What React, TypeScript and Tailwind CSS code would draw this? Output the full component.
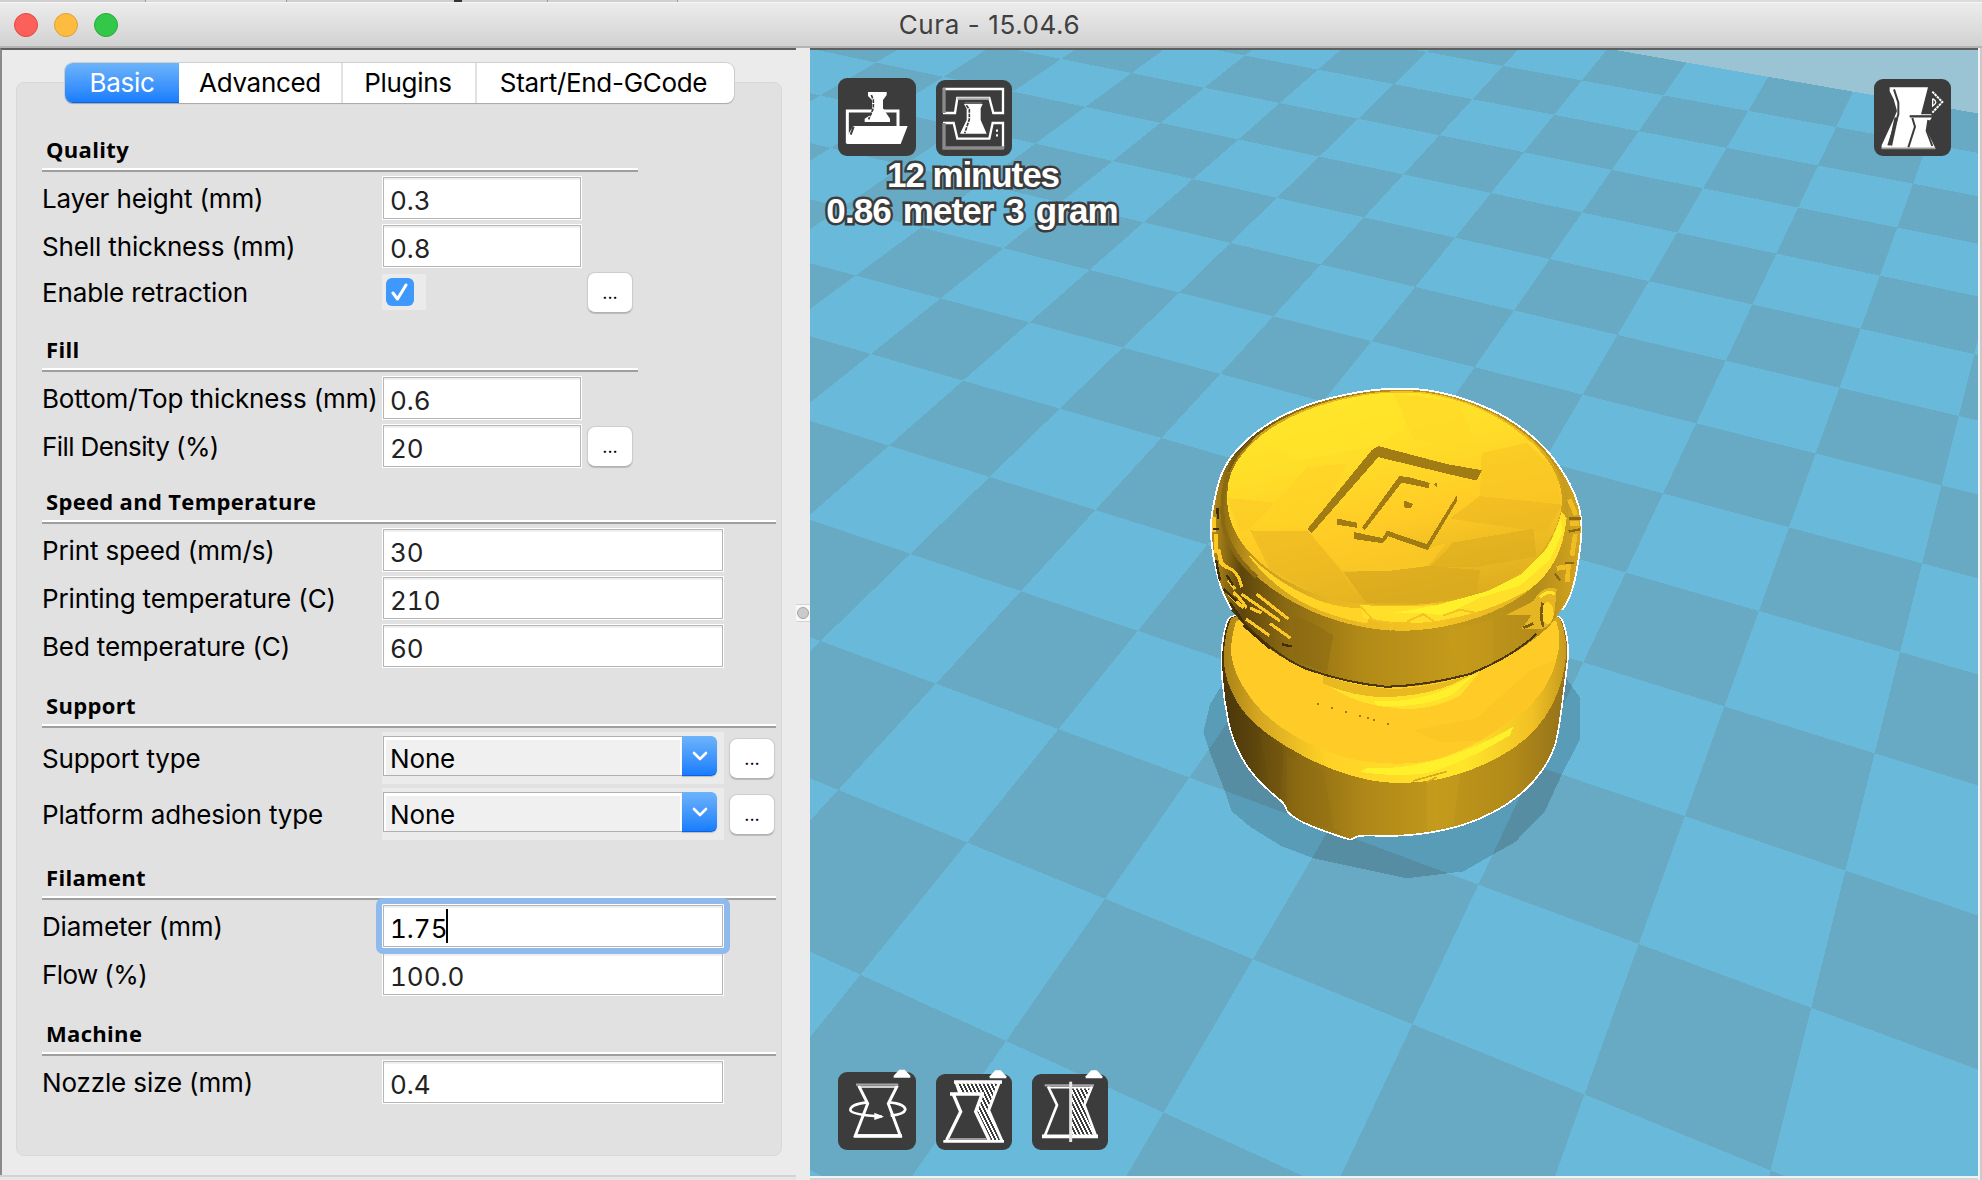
import React from "react";

type Pt = [number, number];

/* ---------- geometry helpers ---------- */

// grid column, grid row, screen x, screen y
const ANCHORS: [number, number, number, number][] = [
  [0, 2, 839, 790],
  [0, 1, 935.3, 684.3],
  [0, 0, 1020.7, 591.1],
  [0, -1, 1095, 510],
  [0, -2, 1161.3, 437.5],
  [-1, 0, 910, 553.9],
  [-1, -2, 1060.7, 408.6],
  [-2, -1, 889.3, 445.4],
  [-2, -3, 1029.3, 322.5],
  [-3, -2, 871, 353.9],
  [6, 2, 1770.7, 1170],
  [5, 2, 1584, 1094.7],
  [5, 1, 1638.7, 944],
  [6, 0, 1845.3, 870.3],
  [5, -2, 1759, 611.4],
  [6, -4, 1941, 485.7],
  [6, -6, 1974.7, 353.6],
  [5, -9, 1913.7, 183.6],
  [4, -7, 1777, 253.9],
  [3, -9, 1726.7, 147.9],
  [4, -11, 1852, 91.7],
];

function solve(m: number[][], v: number[]): number[] {
  const n = v.length;
  const a = m.map((r, i) => [...r, v[i]]);
  for (let c = 0; c < n; c++) {
    let p = c;
    for (let r = c + 1; r < n; r++) if (Math.abs(a[r][c]) > Math.abs(a[p][c])) p = r;
    [a[c], a[p]] = [a[p], a[c]];
    for (let r = 0; r < n; r++) {
      if (r === c) continue;
      const f = a[r][c] / a[c][c];
      for (let k = c; k <= n; k++) a[r][k] -= f * a[c][k];
    }
  }
  return a.map((r, i) => r[n] / r[i]);
}

function fitCamera(): number[] {
  const ata = Array.from({ length: 8 }, () => Array(8).fill(0));
  const atb = Array(8).fill(0);
  for (const [a, b, X, Y] of ANCHORS) {
    const x = (X - 1400) / 500;
    const y = (Y - 600) / 500;
    const rows: [number[], number][] = [
      [[a, b, 1, 0, 0, 0, -a * x, -b * x], x],
      [[0, 0, 0, a, b, 1, -a * y, -b * y], y],
    ];
    for (const [r, t] of rows)
      for (let i = 0; i < 8; i++) {
        atb[i] += r[i] * t;
        for (let j = 0; j < 8; j++) ata[i][j] += r[i] * r[j];
      }
  }
  return solve(ata, atb);
}

const H = fitCamera();
const depth = (a: number, b: number) => H[6] * a + H[7] * b + 1;
function project(a: number, b: number): Pt {
  const w = depth(a, b);
  return [((H[0] * a + H[1] * b + H[2]) / w) * 500 + 1400, ((H[3] * a + H[4] * b + H[5]) / w) * 500 + 600];
}

const FAR_ROW = -11;
const cells: { d: string; dark: boolean }[] = [];
for (let a = -16; a < 12; a++)
  for (let b = FAR_ROW; b < 9; b++) {
    const c: Pt[] = [[a, b], [a + 1, b], [a + 1, b + 1], [a, b + 1]];
    if (c.some(([p, q]) => depth(p, q) < 0.08)) continue;
    cells.push({
      d: "M" + c.map(([p, q]) => project(p, q).map((n) => n.toFixed(1)).join(",")).join("L") + "Z",
      dark: (a + b) % 2 === 0,
    });
  }

// closed curve that passes through the midpoints of the given polygon
function smooth(p: Pt[]): string {
  const mid = (a: Pt, b: Pt) => `${(a[0] + b[0]) / 2},${(a[1] + b[1]) / 2}`;
  let d = `M${mid(p[p.length - 1], p[0])}`;
  p.forEach((q, i) => (d += `Q${q[0]},${q[1]} ${mid(q, p[(i + 1) % p.length])}`));
  return d + "Z";
}

/* ---------- model ---------- */

const LOWER = smooth([[220, 725], [195, 780], [184, 870], [195, 990], [218, 1100], [265, 1185], [320, 1243], [378, 1288], [382, 1312], [430, 1342], [500, 1368], [568, 1390], [572, 1390], [600, 1377], [680, 1380], [760, 1377], [860, 1362], [950, 1335], [1040, 1290], [1115, 1230], [1170, 1155], [1192, 1090], [1213, 930], [1224, 850], [1215, 780], [1190, 725]]);
const LOWER_RIM = smooth([[225, 725], [200, 780], [188, 870], [205, 950], [260, 1040], [370, 1120], [500, 1185], [640, 1226], [770, 1230], [900, 1205], [1040, 1145], [1140, 1065], [1200, 960], [1222, 850], [1212, 780], [1190, 725]]);
const LOWER_FACE = smooth([[235, 735], [218, 790], [210, 860], [240, 940], [310, 1030], [420, 1105], [560, 1160], [700, 1175], [830, 1165], [970, 1105], [1080, 1035], [1160, 950], [1195, 860], [1200, 790], [1180, 735]]);
const UPPER = smooth([[188, 325], [225, 268], [310, 193], [440, 130], [600, 93], [720, 84], [820, 91], [930, 120], [1045, 170], [1150, 250], [1210, 330], [1245, 395], [1262, 455], [1262, 520], [1245, 630], [1225, 695], [1200, 730], [1165, 780], [1060, 855], [930, 915], [800, 945], [680, 952], [560, 935], [440, 900], [335, 848], [245, 765], [195, 690], [170, 610], [156, 530], [155, 460], [172, 380]]);
const UPPER_RIM = smooth([[200, 325], [235, 270], [315, 197], [440, 136], [600, 97], [720, 89], [820, 95], [930, 124], [1040, 174], [1145, 252], [1200, 330], [1225, 400], [1222, 490], [1190, 580], [1120, 665], [1000, 735], [850, 778], [700, 790], [560, 768], [430, 722], [310, 650], [230, 570], [185, 480], [182, 390]]);
const UPPER_FACE = smooth([[212, 325], [245, 272], [320, 202], [445, 140], [600, 101], [720, 93], [820, 99], [930, 128], [1036, 178], [1138, 256], [1190, 330], [1210, 400], [1195, 480], [1140, 570], [1060, 635], [950, 685], [800, 712], [620, 712], [480, 688], [350, 630], [250, 545], [205, 460], [200, 380]]);

const FACETS: [string, string][] = [
  ["700,97 930,125 900,135 960,270 760,230", "#ffd826"],
  ["440,140 725,140 735,200 640,250 420,290 300,230", "#ffe429"],
  ["965,270 1100,240 1195,330 1200,420 960,395", "#f7c423"],
  ["960,395 1205,420 1160,500 930,470 870,460", "#e9b821"],
  ["880,530 1120,490 1130,570 960,600 810,600", "#dbab1e"],
  ["550,615 690,612 810,598 960,610 950,680 800,706 620,706", "#d5a61e"],
  ["270,495 445,497 545,615 600,700 480,685 330,610", "#e7b622"],
  ["450,500 520,430 700,510 800,550 860,530 805,598 690,612 548,613", "#ffcd26"],
  ["345,415 440,312 560,300 500,420 445,490 320,480", "#ffd226"],
  ["200,400 345,415 270,490 240,500", "#fbca26"],
];

const ENGRAVING = [
  "635,262 655,250 860,302 965,320 950,350 860,330 655,282",
  "635,262 655,282 455,503 443,490",
  "718,337 745,340 810,357 805,372 725,356 615,493 605,488",
  "822,362 832,354 832,371",
  "732,408 760,418 752,430 732,428",
  "530,460 592,473 590,487 530,478",
  "583,500 668,517 680,495 800,535 892,390 892,408 803,552 685,512 668,532 583,520",
];

function Model() {
  return (
    <g transform="translate(1160 360) scale(0.33333 0.34439)">
      <polygon fill="#000" fillOpacity="0.16" points="200,920 150,1000 130,1080 150,1140 190,1240 215,1310 270,1355 365,1412 465,1448 740,1505 910,1485 1000,1435 1065,1400 1155,1310 1205,1205 1260,1100 1260,980 1215,920" />
      <path d={LOWER} fill="url(#side)" stroke="#fff" strokeWidth="10" />
      <path d={LOWER} fill="url(#side)" />
      <polygon fill="#8f6d13" points="380,1150 490,1190 520,1360 560,1385 382,1310" opacity=".35" />
      <polygon fill="#c79d1d" points="800,1228 900,1205 880,1350 800,1372" opacity=".5" />
      <polygon fill="#6f530e" points="300,1080 370,1125 360,1275 330,1245" opacity=".4" />
      <path d={LOWER_RIM} fill="url(#rim)" />
      <path d={LOWER_FACE} fill="#ffcb26" />
      <path d="M760,1075 L950,1040 L1110,900 L1190,870 L1150,960 L1080,1030 L960,1105 L840,1110Z" fill="#fbc524" opacity=".8" />
      <path d="M500,925 C600,985 800,985 960,905 L900,975 Q800,1025 700,1010 Q580,1000 500,940Z" fill="#ffe02a" />
      <path d="M640,990 Q800,1000 940,915 L880,970 Q790,1012 650,1003Z" fill="#fff02c" />
      <path d="M490,940 Q600,985 700,978 Q840,970 930,915 Q800,955 690,955 Q570,945 490,915Z" fill="#e9b922" />
      <path d="M620,1185 Q830,1195 1060,1065 L1050,1090 Q900,1175 800,1200 Q700,1212 600,1196Z" fill="#fff02c" />
      <path d="M760,1222 L860,1195 M800,1226 L830,1212" stroke="#d9a91f" strokeWidth="5" />
      {[[470, 995], [513, 1007], [555, 1019], [597, 1031], [621, 1037], [639, 1042], [681, 1054]].map(([x, y]) => (
        <rect key={x} x={x} y={y} width="6" height="6" fill="#a17c15" />
      ))}

      <path d={UPPER} fill="none" stroke="#fff" strokeWidth="11" clipPath="url(#aboveWaist)" />
      <path d={UPPER} fill="url(#side2)" />
      <path d="M215,725 Q340,860 440,897 Q560,938 680,949 Q800,945 930,912 Q1060,860 1130,795" fill="none" stroke="#4a370a" strokeWidth="6" />
      <polygon fill="#8a6912" points="400,740 470,770 520,800 500,910 400,870" opacity=".45" />
      <polygon fill="#c89e1d" points="860,790 1000,750 1000,880 900,915" opacity=".35" />
      <path d={UPPER_RIM} fill="url(#rim2)" />
      <path d={UPPER_FACE} fill="url(#face)" />
      <g clipPath="url(#faceClip)">
        {FACETS.map(([p, c]) => (
          <polygon key={p} points={p} fill={c} opacity=".6" />
        ))}
      </g>
      <path d="M260,560 Q350,650 480,700 Q560,725 640,722 L620,765 Q520,748 440,710 Q330,655 260,560Z" fill="#ffd427" />
      <path d="M600,712 Q700,716 830,712 Q960,692 1070,635 Q1170,570 1205,440 L1220,460 Q1205,600 1110,665 Q980,740 800,762 Q700,765 610,750Z" fill="#ffdf29" />
      <path d="M700,735 L830,712 L980,672 L1080,625 L1165,545 L1203,460 L1208,500 L1170,580 L1080,655 L960,690 L850,742 L790,735Z" fill="#fff02c" />
      <path d="M600,715 L640,755 L700,765 L690,785 M740,760 L790,738 L830,765 M850,742 L900,725 L950,735" stroke="#f3c323" strokeWidth="6" fill="none" />

      {/* raised lettering round the left edge */}
      <g fill="none" stroke="#fbc825" strokeWidth="9">
        <path d="M163,455 V500 M168,505 V560 M175,550 L184,590 L200,602" strokeWidth="12" />
        <path d="M195,600 Q235,610 245,660 M205,640 L225,665 M205,680 L250,720 M220,675 Q240,690 260,720" />
        <path d="M290,680 L385,752 M245,680 L360,758 M270,720 L305,735 M258,752 L328,800 M330,765 L392,808" />
      </g>
      <g fill="none" stroke="#3f2e08" strokeWidth="7">
        <path d="M172,430 L174,462 M160,490 H176 M168,580 L180,640 M200,625 L220,655 M190,665 L230,700 M210,705 L250,760 M250,770 L330,838 M365,825 L395,832" />
        <path d="M205,330 Q180,400 190,480 Q215,570 290,630" stroke="#8a6912" strokeWidth="12" />
        <path d="M205,325 Q225,275 275,232" stroke="#7a5c10" />
      </g>
      {/* raised ornament on the right edge */}
      <path d="M1120,700 Q1150,650 1190,665 L1185,720 Q1180,775 1140,782 L1085,780 L1115,740 L1040,740Z" fill="#e5b522" />
      <ellipse cx="1163" cy="735" rx="18" ry="32" fill="#ffd227" />
      <path d="M1140,690 Q1165,665 1185,680" stroke="#ffe52a" strokeWidth="9" fill="none" />
      <path d="M1090,778 L1120,765 M1148,705 Q1138,740 1150,775" stroke="#7a5c10" strokeWidth="8" fill="none" />
      <path d="M1228,405 L1248,450 M1230,475 H1256 M1246,505 L1236,568 M1190,605 L1225,600 L1222,645" stroke="#f0be23" strokeWidth="14" fill="none" />
      <path d="M1226,460 H1262 M1226,498 L1260,492 M1215,590 L1242,590 M1200,640 L1185,620" stroke="#8a6912" strokeWidth="7" fill="none" />

      {ENGRAVING.map((p) => (
        <polygon key={p} points={p} fill="#a17c15" />
      ))}
    </g>
  );
}

function Scene() {
  return (
    <svg className="block h-full w-full" viewBox="810 50 1168 1126" preserveAspectRatio="none" shapeRendering="crispEdges">
      <defs>
        <linearGradient id="side">
          <stop offset="0" stopColor="#4a360a" />
          <stop offset=".1" stopColor="#5e460c" />
          <stop offset=".22" stopColor="#8a6912" />
          <stop offset=".4" stopColor="#ad8618" />
          <stop offset=".62" stopColor="#c0981b" />
          <stop offset=".85" stopColor="#b08919" />
          <stop offset="1" stopColor="#94711a" />
        </linearGradient>
        <linearGradient id="side2">
          <stop offset="0" stopColor="#b88f19" />
          <stop offset=".08" stopColor="#5e460c" />
          <stop offset=".2" stopColor="#8a6912" />
          <stop offset=".4" stopColor="#b18917" />
          <stop offset=".65" stopColor="#c49a1b" />
          <stop offset=".88" stopColor="#b48c19" />
          <stop offset="1" stopColor="#d4a51f" />
        </linearGradient>
        <linearGradient id="rim">
          <stop offset="0" stopColor="#a98217" />
          <stop offset=".1" stopColor="#d5a620" />
          <stop offset=".3" stopColor="#ffd227" />
          <stop offset=".7" stopColor="#ffe52a" />
          <stop offset=".9" stopColor="#f2c124" />
          <stop offset="1" stopColor="#c69b1e" />
        </linearGradient>
        <linearGradient id="rim2">
          <stop offset="0" stopColor="#8d6b12" />
          <stop offset=".1" stopColor="#c99e1d" />
          <stop offset=".3" stopColor="#e6b521" />
          <stop offset=".6" stopColor="#f5c424" />
          <stop offset=".9" stopColor="#e6b520" />
          <stop offset="1" stopColor="#c69b1c" />
        </linearGradient>
        <linearGradient id="face" x1=".3" y1="0" x2=".65" y2="1">
          <stop offset="0" stopColor="#ffe82a" />
          <stop offset=".3" stopColor="#ffdd28" />
          <stop offset=".6" stopColor="#ffcb26" />
          <stop offset="1" stopColor="#dcac20" />
        </linearGradient>
        <clipPath id="faceClip"><path d={UPPER_FACE} /></clipPath>
        <clipPath id="aboveWaist"><path d="M100,0H1380V725H100Z" /></clipPath>
      </defs>
      <rect x="810" y="50" width="1168" height="1126" fill="#9ac3d4" />
      {cells.map((c) => (
        <path key={c.d} d={c.d} fill={c.dark ? "#68a9c3" : "#69bada"} />
      ))}
      <Model />
    </svg>
  );
}

/* ---------- viewport tool icons ---------- */

function Tool({ box, children, size = "h-[76px] w-[76px]" }: { box: string; children: React.ReactNode; size?: string }) {
  return (
    <button className={"block rounded-[9px] bg-[#3c3c3c] " + size}>
      <svg viewBox={box} className="block h-full w-full overflow-visible" fill="none" stroke="#fff" strokeWidth="7">
        {children}
      </svg>
    </button>
  );
}

const LoadIcon = () => (
  <Tool box="84 114 234 234" size="h-[78px] w-[78px]">
    <path d="M112,310 V213 H264 V262" strokeWidth="9" />
    <path d="M174,156 H230 V165 L219,180 V205 L240,236 V246 H164 V236 L186,222 V180 L174,168Z" fill="#fff" stroke="none" />
    <path d="M184,165 L190,180 V205 L176,238" stroke="#3c3c3c" strokeWidth="5" strokeDasharray="11 3" />
    <path d="M130,258 H293 L272,312 H110 V290Z" fill="#fff" stroke="none" />
    <path d="M131,260 L122,284" stroke="#3c3c3c" strokeWidth="6" />
  </Tool>
);

const SaveIcon = () => (
  <Tool box="378 120 228 228">
    <path d="M399,219 H435 L442,174 H538 L550,219 H579 V147 H399" />
    <path d="M399,249 H431 L442,296 H538 L548,249 H579 V326" />
    <path d="M402,145 V219 M402,249 V324 H582" stroke="#8b8b8b" strokeWidth="10" />
    <path d="M442,176 H538" stroke="#b0b0b0" />
    <path d="M462,192 H518 L512,205 V240 L530,281 H450 L470,240 V206Z" fill="#fff" stroke="none" />
    <path d="M469,196 L478,208 V238 L464,280" stroke="#3c3c3c" strokeWidth="5" strokeDasharray="11 3" />
    <path d="M464,189 H516" stroke="#777" strokeWidth="4" />
    <path d="M558,272h6M558,286h6" />
  </Tool>
);

const ViewIcon = () => (
  <Tool box="283 119 231 231" size="h-[77px] w-[77px]">
    <path d="M330,144 H445 L424,225 H455 V238 L442,250 V275 L468,328 H306 V318 L342,240 L352,215 L342,180 L330,156Z" fill="#fff" stroke="none" />
    <path d="M343,150 L356,190 V225 L326,318 M398,236 L406,262 L386,324 M446,242 L441,275 L458,320" stroke="#3c3c3c" strokeWidth="6" />
    <path d="M350,235 L332,318" stroke="#3c3c3c" strokeWidth="11" />
    <path d="M390,231 H456" stroke="#3c3c3c" />
    <path d="M306,327 H466" stroke="#9a9a9a" strokeWidth="5" />
    <path d="M458,157 L488,188 L458,220" strokeWidth="6" strokeDasharray="8 2" />
    <path d="M459,178 V200 Q478,188 459,178" strokeWidth="4" />
  </Tool>
);

const Marker = ({ x }: { x: number }) => <path d={`M${x - 25},84 V78 L${x - 8},60 H${x + 8} L${x + 25},78 V84Z`} fill="#fff" stroke="none" />;

const RotateIcon = () => (
  <Tool box="54 67 234 234" size="h-[78px] w-[78px]">
    <Marker x={246} />
    <path d="M116,108 L143,162 L106,258 H241 L205,162 L232,108" strokeWidth="9" />
    <path d="M108,105 H235" stroke="#a5a5a5" />
    <path d="M118,112 H228" strokeWidth="5" />
    <path d="M102,259 H246" strokeWidth="11" />
    <path d="M143,158 Q92,163 91,181 Q94,196 185,200 M206,158 Q254,162 256,180 Q252,194 212,198" strokeWidth="8" />
    <path d="M163,189 L192,201 L163,211Z" fill="#fff" stroke="none" />
  </Tool>
);

// zigzag texture: staggered rows of white dashes inside the given outline
function Hatched({ id, outline, x, y, rows }: { id: string; outline: string; x: number; y: number; rows: number }) {
  return (
    <g clipPath={`url(#${id})`} shapeRendering="crispEdges">
      <clipPath id={id}><path d={outline} /></clipPath>
      {Array.from({ length: rows }, (_, i) => (
        <path key={i} d={`M${x + [0, 3, 6, 9][i % 4] - 12},${y + i * 6} h170`} strokeWidth="6" strokeDasharray="6 6" />
      ))}
    </g>
  );
}

const ScaleIcon = () => (
  <Tool box="348 71 228 228">
    <Marker x={534} />
    <Hatched id="scaleHatch" outline="M410,96 H538 L506,180 L542,270 H508 L468,182 L486,132 H420Z" x={408} y={98} rows={30} />
    <path d="M408,96 L420,130 M538,96 L506,180 L546,272" strokeWidth="9" />
    <path d="M402,95 H546" strokeWidth="10" />
    <path d="M390,131 H492 M400,132 L422,184 L380,270 M486,132 L467,184 L508,270" strokeWidth="10" />
    <path d="M370,273 H552" strokeWidth="8" />
    <path d="M384,266 H500" stroke="#bbb" strokeWidth="4" />
  </Tool>
);

const MirrorIcon = () => (
  <Tool box="636 71 228 228">
    <Marker x={822} />
    <Hatched id="mirrorHatch" outline="M752,110 H813 L791,164 L824,256 H752Z" x={750} y={116} rows={25} />
    <path d="M684,108 L711,164 L674,258 M816,108 L793,164 L828,258" strokeWidth="8" />
    <path d="M674,105 H822" stroke="#a5a5a5" />
    <path d="M684,112 H816" strokeWidth="5" />
    <path d="M666,258 H834" strokeWidth="11" />
    <path d="M752,94 V275" strokeWidth="9" stroke="#e6e6e6" />
  </Tool>
);

/* ---------- settings panel ---------- */

const sans = "font-['Inter','Liberation_Sans',sans-serif]";

function Section({ title, height, short, children }: { title: string; height: string; short?: boolean; children: React.ReactNode }) {
  return (
    <section className={height}>
      <h2 className="h-10 pt-[3px] pl-[4px] font-['Open_Sans','Noto_Sans',sans-serif] text-[22px] leading-[36px] font-bold tracking-[0.32px] text-black">{title}</h2>
      <div className={"mb-1 h-1 border-t-2 border-b-2 border-t-white border-b-[#9f9f9f] " + (short ? "w-[596px]" : "w-[734px]")} />
      <div className="flex flex-col gap-1">{children}</div>
    </section>
  );
}

function Row({ label, height = "h-11", tight, children }: { label: string; height?: string; tight?: boolean; children: React.ReactNode }) {
  return (
    <div className={"flex items-center " + height}>
      <label className={"w-[340px] text-[26px] whitespace-nowrap text-black " + (tight ? "tracking-[-0.6px]" : "tracking-[-0.14px]")}>{label}</label>
      {children}
    </div>
  );
}

function Field({ value, short, focused }: { value: string; short?: boolean; focused?: boolean }) {
  return (
    <div
      className={
        "flex h-11 items-center border border-white bg-white " +
        (short ? "w-[200px] " : "w-[342px] ") +
        (focused ? "relative z-10 rounded-[1px] outline-[6px] outline-[#8fbaed] " : "")
      }
    >
      <div className={"flex h-full w-full items-center border border-[#b5b5b5] pt-[4px] pl-[6px] text-[26px] tabular-nums shadow-[inset_0_2px_0_#f0f0f0] " + (focused ? "text-black" : "text-[#222]")}>
        <span>{value}</span>
        {focused && <span className="-mt-[4px] -ml-[2px] h-[34px] w-[2px] bg-black" />}
      </div>
    </div>
  );
}

const More = ({ className }: { className: string }) => (
  <button className={"h-[41px] w-[46px] rounded-[8px] border border-[#cdcdcd] border-b-[#b0b0b0] bg-white text-[18px] leading-[32px] text-black shadow-[0_1px_1px_#bbb] " + className}>...</button>
);

function Select({ value }: { value: string }) {
  return (
    <div className="h-full w-[342px] bg-[#ebebeb] pt-1 pl-px">
      <div className="flex h-10 w-[334px]">
        <div className="flex-1 border border-r-0 border-[#b0b0b0] bg-[#f0f0f0] pt-[3px] pl-[6px] text-[26px] leading-[38px] tracking-[-0.14px] text-black shadow-[inset_0_3px_0_#fff,inset_2px_0_0_#fff,inset_-2px_0_0_#fff]">{value}</div>
        <div className="flex w-[35px] items-center justify-center rounded-r-[6px] border-b border-b-[#1060e0] bg-linear-to-b from-[#6cb3fa] to-[#167dfc] shadow-[0_1px_1px_#bbb]">
          <svg width="16" height="10" viewBox="0 0 16 10" fill="none" stroke="#fff" strokeWidth="2.6" strokeLinecap="round" strokeLinejoin="round">
            <path d="M2,2 L8,8 L14,2" />
          </svg>
        </div>
      </div>
    </div>
  );
}

function Tabs() {
  const tab = "flex h-10 items-center justify-center pb-px text-[26px] tracking-[-0.3px]";
  return (
    <div className="relative z-10 ml-[49px] flex h-10 w-[669px] overflow-hidden rounded-[8px] bg-white shadow-[0_1px_1px_#a8a8a8,0_0_0_1px_#cfcfcf]">
      <div className={tab + " w-[114px] border-b border-b-[#1060e0] bg-linear-to-b from-[#6cb3fa] to-[#167dfc] text-white"}>Basic</div>
      <div className={tab + " w-[162px] text-black"}>Advanced</div>
      <div className={tab + " w-[134px] border-l-2 border-[#e2e2e2] pr-[2px] text-black"}>Plugins</div>
      <div className={tab + " w-[259px] border-l-2 border-[#e2e2e2] pr-[4px] text-black"}>Start/End-GCode</div>
    </div>
  );
}

function Settings() {
  return (
    <div className="h-[1127px] w-[796px] border-t-2 border-l-2 border-t-[#5f5f5f] border-l-[#8a8a8a] bg-[#ebebeb] pt-[13px] pl-[14px]">
      <Tabs />
      <div className="-mt-[21px] h-[1074px] w-[766px] rounded-[8px] border border-[#d8d8d8] bg-[#e1e1e1] pt-[45px] pl-[25px]">
        <Section title="Quality" height="h-[200px]" short>
          <Row label="Layer height (mm)"><Field value="0.3" short /></Row>
          <Row label="Shell thickness (mm)"><Field value="0.8" short /></Row>
          <Row label="Enable retraction" height="h-10">
            <div className="flex h-9 w-11 items-center bg-[#ebebeb] pl-1">
              <div className="flex h-7 w-7 items-center justify-center rounded-[6px] bg-[#3f98fb]">
                <svg width="18" height="20" viewBox="0 0 18 20" fill="none" stroke="#fff" strokeWidth="3" strokeLinecap="round" strokeLinejoin="round">
                  <path d="M2,11 L6.5,17 L15,3" />
                </svg>
              </div>
            </div>
            <More className="mt-px ml-[161px]" />
          </Row>
        </Section>
        <Section title="Fill" height="h-[152px]" short>
          <Row label="Bottom/Top thickness (mm)"><Field value="0.6" short /></Row>
          <Row label="Fill Density (%)" tight><Field value="20" short /><More className="mt-px ml-[5px]" /></Row>
        </Section>
        <Section title="Speed and Temperature" height="h-[204px]">
          <Row label="Print speed (mm/s)"><Field value="30" /></Row>
          <Row label="Printing temperature (C)"><Field value="210" /></Row>
          <Row label="Bed temperature (C)"><Field value="60" /></Row>
        </Section>
        <Section title="Support" height="h-[172px]">
          <Row label="Support type" height="h-[52px]"><Select value="None" /><More className="mt-px ml-[5px]" /></Row>
          <Row label="Platform adhesion type" height="h-[52px]"><Select value="None" /><More className="mt-px ml-[5px]" /></Row>
        </Section>
        <Section title="Filament" height="h-[156px]">
          <Row label="Diameter (mm)"><Field value="1.75" focused /></Row>
          <Row label="Flow (%)" tight><Field value="100.0" /></Row>
        </Section>
        <Section title="Machine" height="h-[130px]">
          <Row label="Nozzle size (mm)"><Field value="0.4" /></Row>
        </Section>
      </div>
    </div>
  );
}

const outlined = "font-['Liberation_Sans',sans-serif] font-bold text-white [-webkit-text-stroke:5px_#3c3c3c] [paint-order:stroke_fill] whitespace-nowrap";

function Viewport() {
  return (
    <div className="relative h-[1126px] w-[1168px] overflow-hidden">
      <Scene />
      <div className="absolute inset-0 flex flex-col justify-between pt-[28px] pr-[27px] pb-[26px] pl-[28px]">
        <div className="flex items-start justify-between">
          <div>
            <div className="flex items-end gap-5"><LoadIcon /><SaveIcon /></div>
            <div className={"-ml-[13px] w-[294px] pt-px text-center text-[35px] leading-[36px] " + outlined}>
              <div className="pl-[2px] tracking-[-1.1px]">12 minutes</div>
              <div className="tracking-[-0.9px] [word-spacing:3px]">0.86 meter 3 gram</div>
            </div>
          </div>
          <div className="pt-px"><ViewIcon /></div>
        </div>
        <div className="flex items-end gap-5"><RotateIcon /><ScaleIcon /><MirrorIcon /></div>
      </div>
    </div>
  );
}

export default function App() {
  return (
    <div className={"flex h-[1180px] w-[1982px] flex-col overflow-hidden bg-[#ebebeb] " + sans}>
      <div className="flex h-[2px] bg-[#cfcfcf]">
        <div className="ml-[145px] w-[142px] border-x border-[#999] bg-[#dadada]" />
        <div className="ml-[167px] h-[2px] w-2 bg-[#333]" />
        <div className="ml-[85px] w-[131px] border-x border-[#999]" />
        <div className="flex-1 bg-[#dcdcdc]" />
      </div>
      <header className="flex h-[46px] shrink-0 items-center border-t border-b-2 border-t-[#f6f6f6] border-b-[#b4b4b4] bg-linear-to-b from-[#ececec] to-[#d2d2d2] px-[14px]">
        <div className="flex w-[120px] gap-4">
          <span className="h-6 w-6 rounded-full border border-[#e24640] bg-[#fc605b]" />
          <span className="h-6 w-6 rounded-full border border-[#dfa032] bg-[#fdbc40]" />
          <span className="h-6 w-6 rounded-full border border-[#24a936] bg-[#34c84a]" />
        </div>
        <h1 className="flex-1 pr-[123px] text-center text-[26px] tracking-[0.6px] text-[#404040]">Cura - 15.04.6</h1>
      </header>
      <main className="flex h-[1132px]">
        <div>
          <Settings />
          <div className="h-[5px] w-[796px] border-t-2 border-[#d2d2d2] bg-[#e6e6e6]" />
        </div>
        <div className="flex w-[14px] flex-col bg-[#ebebeb] pt-[556px]">
          <div className="flex h-[18px] items-center justify-center border-y border-[#d4d4d4] bg-[#f8f8f8]">
            <span className="h-3 w-3 rounded-full border border-[#a4a4a4] bg-[#cbcbcb]" />
          </div>
        </div>
        <div>
          <div className="h-[2px] w-[1168px] bg-[#5f5f5f]" />
          <Viewport />
          <div className="h-1 border-t-2 border-[#f2f2f2] bg-[#d4d4d4]" />
        </div>
        <div className="w-1 border-l-2 border-[#f2f2f2] bg-[#c9c9c9]" />
      </main>
    </div>
  );
}
